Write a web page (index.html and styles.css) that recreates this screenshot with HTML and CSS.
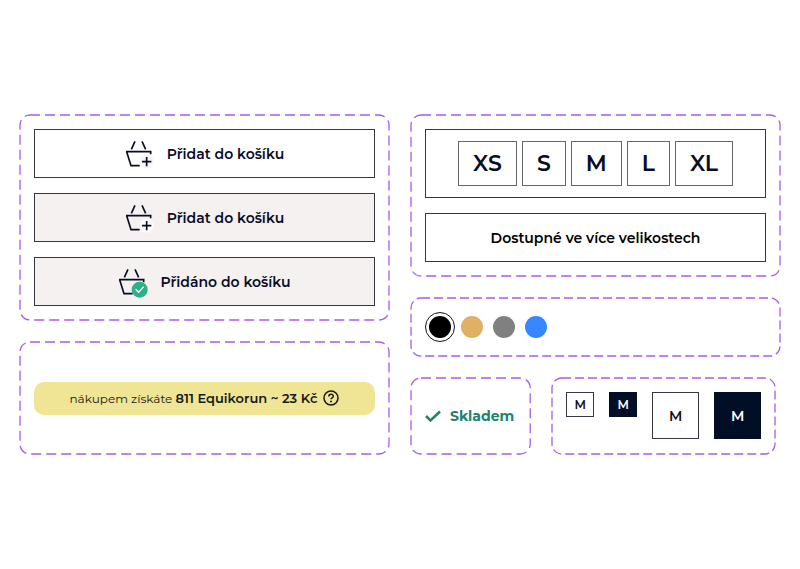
FILE: index.html
```html
<!DOCTYPE html>
<html lang="cs">
<head>
<meta charset="utf-8">
<meta name="viewport" content="width=device-width, initial-scale=1">
<title>Komponenty e-shopu</title>
<link rel="stylesheet" href="styles.css">
</head>
<body>
<svg class="defs" aria-hidden="true">
  <symbol id="basket" viewBox="0 0 90 90">
    <path d="M30 7 19 31M51 7 62 31M77 46V38H3M5 38 18 80H44" fill="none" stroke="currentColor" stroke-width="5"/>
  </symbol>
</svg>
<main class="board">
  <div class="column">
    <section class="panel stack">
      <svg class="outline outline-long" aria-hidden="true"><rect width="100%" height="100%" rx="10"/></svg>
      <button class="cart">
        <svg class="basket" viewBox="0 0 90 90" aria-hidden="true"><use href="#basket"/><circle class="badge" cx="65" cy="68" r="21"/><path class="plus" d="M51 68H79M65 54V82"/></svg>
        Přidat do košíku
      </button>
      <button class="cart cart-hover">
        <svg class="basket" viewBox="0 0 90 90" aria-hidden="true"><use href="#basket"/><circle class="badge" cx="65" cy="68" r="21"/><path class="plus" d="M51 68H79M65 54V82"/></svg>
        Přidat do košíku
      </button>
      <button class="cart cart-added">
        <svg class="basket" viewBox="0 0 90 90" aria-hidden="true"><use href="#basket"/><circle class="badge" cx="65" cy="68" r="24"/><path class="tick" d="M53 67 62 76 77 59"/></svg>
        Přidáno do košíku
      </button>
    </section>
    <section class="panel reward-panel">
      <svg class="outline outline-long" aria-hidden="true"><rect width="100%" height="100%" rx="10"/></svg>
      <p class="reward">
        <span>nákupem získáte <strong>811 Equikorun ~ 23 Kč</strong></span>
        <svg class="help" viewBox="0 0 16 16" aria-hidden="true"><circle cx="8" cy="8" r="7"/><path d="M5.8 6.5C5.8 3.5 10.3 3.6 10.3 6.2 10.3 7.8 8 7.8 8 9.3"/><circle class="dot" cx="8" cy="11.4" r="1"/></svg>
      </p>
    </section>
  </div>
  <div class="column">
    <section class="panel stack">
      <svg class="outline outline-long" aria-hidden="true"><rect width="100%" height="100%" rx="10"/></svg>
      <div class="sizes">
        <button class="size">XS</button>
        <button class="size">S</button>
        <button class="size">M</button>
        <button class="size">L</button>
        <button class="size">XL</button>
      </div>
      <button class="cart available">Dostupné ve více velikostech</button>
    </section>
    <section class="panel swatches">
      <svg class="outline" aria-hidden="true"><rect width="100%" height="100%" rx="10"/></svg>
      <input class="swatch black" type="radio" name="color" aria-label="Černá" checked>
      <input class="swatch sand" type="radio" name="color" aria-label="Písková">
      <input class="swatch gray" type="radio" name="color" aria-label="Šedá">
      <input class="swatch blue" type="radio" name="color" aria-label="Modrá">
    </section>
    <div class="row">
      <section class="panel stock">
        <svg class="outline outline-long" aria-hidden="true"><rect width="100%" height="100%" rx="10"/></svg>
        <svg class="check" viewBox="0 0 16 12" aria-hidden="true"><path d="M1 6 5.5 10.5 15 1.5"/></svg>
        <span>Skladem</span>
      </section>
      <section class="panel tiles">
        <svg class="outline" aria-hidden="true"><rect width="100%" height="100%" rx="10"/></svg>
        <button class="tile">M</button>
        <button class="tile selected">M</button>
        <button class="tile large">M</button>
        <button class="tile large selected">M</button>
      </section>
    </div>
  </div>
</main>
</body>
</html>
```
FILE: styles.css
```css
* { box-sizing: border-box; }

body {
  margin: 0;
  background: #fff;
  color: #080d26;
  font-family: Montserrat, Inter, sans-serif;
  font-size: 14px;
}

button {
  margin: 0;
  padding: 0;
  color: inherit;
  font: inherit;
  font-weight: 600;
  background: #fff;
  border: 1px solid #343646;
  border-radius: 0;
}

.defs { position: absolute; width: 0; height: 0; }

.board {
  display: grid;
  grid-template-columns: 1fr 1fr;
  gap: 20px;
  padding: 114px 19px;
}

.column { display: flex; flex-direction: column; gap: 20px; }

.panel { position: relative; padding: 15px; }

.outline {
  position: absolute;
  inset: 1px;
  width: calc(100% - 2px);
  height: calc(100% - 2px);
  overflow: visible;
  pointer-events: none;
}

.outline rect {
  fill: none;
  stroke: #a45cf5;
  stroke-width: 1.3;
  stroke-dasharray: 9 4;
}

.outline-long rect { stroke-dasharray: 10 5; }

.stack { display: flex; flex-direction: column; gap: 15px; }

.cart {
  display: flex;
  align-items: center;
  justify-content: center;
  gap: 12px;
  height: 49px;
}

.cart-hover, .cart-added { background: #f5f1f0; }

.available { color: #000; }

.basket { width: 30px; height: 30px; overflow: visible; }
.badge { fill: #f8f5f5; }
.cart-hover .badge { fill: #fff; }
.cart-added .badge { fill: #2fb08a; }
.plus { fill: none; stroke: currentColor; stroke-width: 5; }
.tick { fill: none; stroke: #fff; stroke-width: 4; }

.reward-panel { flex: 1; display: flex; align-items: center; }

.reward {
  display: flex;
  flex: 1;
  align-items: center;
  justify-content: center;
  gap: 6px;
  height: 33px;
  margin: 0;
  color: #151918;
  font-size: 12px;
  background: #efe595;
  border-radius: 10px;
}

.reward strong { font-size: 13px; font-weight: 600; }

.help { width: 16px; height: 16px; fill: none; stroke: #151918; stroke-width: 1.5; }
.help .dot { fill: #151918; stroke: none; }

.sizes {
  display: flex;
  align-items: center;
  justify-content: center;
  gap: 5px;
  height: 69px;
  border: 1px solid #343646;
}

.size {
  height: 45px;
  padding: 0 14px;
  font-size: 22px;
  border-color: #666;
}

.swatches {
  display: flex;
  align-items: center;
  gap: 10px;
  padding: 19px;
}

.swatch {
  width: 22px;
  height: 22px;
  margin: 0;
  appearance: none;
  border-radius: 50%;
}

.swatch:checked { outline: 1px solid #101426; outline-offset: 3px; }

.black { background: #000; }
.sand { background: #e0b064; }
.gray { background: #808080; }
.blue { background: #3788ff; }

.row { display: flex; gap: 20px; }

.stock {
  display: flex;
  align-items: center;
  gap: 9px;
  padding-right: 17px;
  color: #20826b;
  font-weight: 700;
}

.check { width: 16px; height: 12px; fill: none; stroke: currentColor; stroke-width: 2.5; }

.tiles { display: flex; align-items: flex-start; gap: 15px; padding-bottom: 16px; }

.tile { width: 28px; height: 25px; font-size: 12px; color: #101018; }
.large { width: 47px; height: 47px; font-size: 14px; }
.selected { color: #fff; background: #000e26; border-color: #000e26; }
```
